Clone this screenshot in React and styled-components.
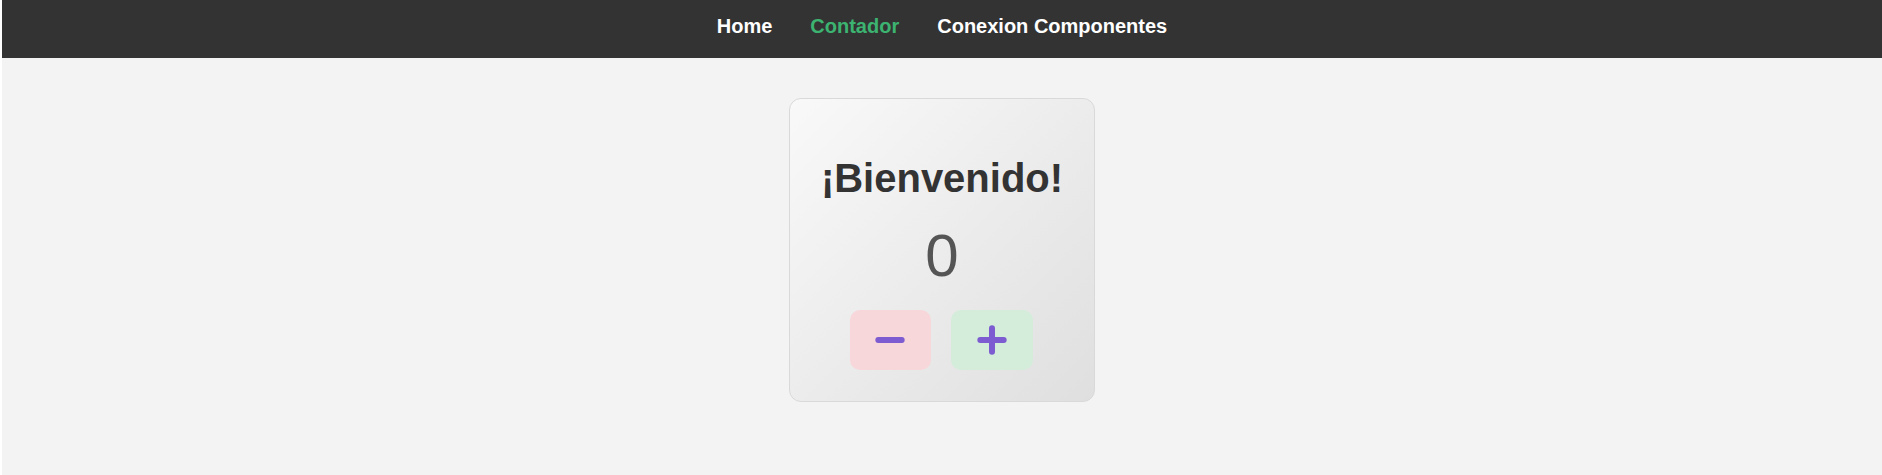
import React, { useState } from 'react'
import styled, { createGlobalStyle } from 'styled-components'
import { Minus, Plus } from 'lucide-react'

const GlobalStyle = createGlobalStyle`
    html, body {
        margin: 0;
        padding: 0;
        background: #ffffff;
        font-family: "Liberation Sans", Arial, sans-serif;
    }
`

// page shell
const Page = styled.div`
    margin-left: 2px;
    min-height: 100vh;
    background: #f3f3f3;
`

const NavBar = styled.nav`
    display: flex;
    justify-content: center;
    gap: 38px;
    background: #333333;
    padding: 15px 0 20px;
`

const NavLink = styled.a`
    font-size: 20px;
    line-height: 23px;
    font-weight: bold;
    text-decoration: none;
    color: ${props => (props.active ? '#3cb371' : '#ffffff')};
    cursor: pointer;
`

const Main = styled.main`
    display: flex;
    justify-content: center;
    padding-top: 40px;
`

// counter card
const Card = styled.div`
    box-sizing: border-box;
    width: 306px;
    display: flex;
    flex-direction: column;
    align-items: center;
    gap: 20px;
    padding: 56px 20px 31px;
    border: 1px solid #d9d9d9;
    border-radius: 12px;
    background: linear-gradient(135deg, #f9f9f9, #dfdfdf);
`

const Title = styled.h1`
    margin: 0;
    font-size: 40px;
    line-height: 46px;
    font-weight: bold;
    color: #333333;
`

const Count = styled.div`
    font-size: 60px;
    line-height: 69px;
    color: #555555;
`

const Buttons = styled.div`
    display: flex;
    gap: 20px;
    margin-left: -2px;
`

const CountButton = styled.button`
    display: flex;
    align-items: center;
    justify-content: center;
    width: ${props => props.width}px;
    height: 60px;
    padding: 0;
    border: none;
    border-radius: 10px;
    background: ${props => props.bg};
    color: #7d5bd0;
    cursor: pointer;
`

const links = ['Home', 'Contador', 'Conexion Componentes']

export default function App() {
    const [count, setCount] = useState(0)

    return (
        <Page>
            <GlobalStyle />
            <NavBar>
                {links.map(link => (
                    <NavLink key={link} active={link === 'Contador'}>{link}</NavLink>
                ))}
            </NavBar>
            <Main>
                <Card>
                    <Title>¡Bienvenido!</Title>
                    <Count>{count}</Count>
                    <Buttons>
                        <CountButton width={81} bg="#f8d7da" onClick={() => setCount(count - 1)}>
                            <Minus size={40} strokeWidth={3.6} />
                        </CountButton>
                        <CountButton width={82} bg="#d4edda" onClick={() => setCount(count + 1)}>
                            <Plus size={40} strokeWidth={3.6} />
                        </CountButton>
                    </Buttons>
                </Card>
            </Main>
        </Page>
    )
}
